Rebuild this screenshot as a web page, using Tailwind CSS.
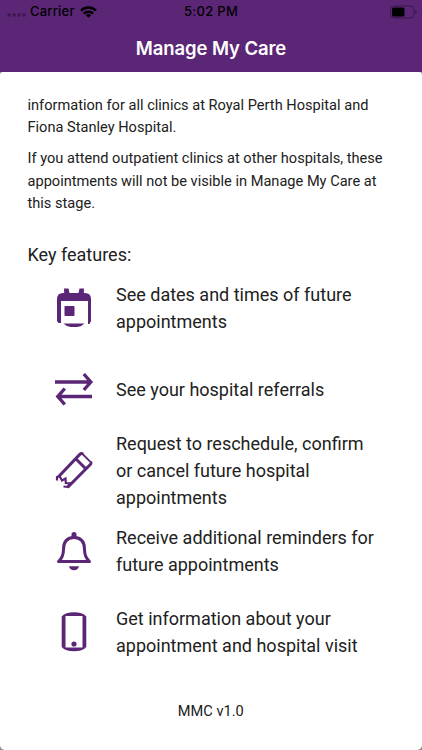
<!DOCTYPE html>
<html lang="en">
<head>
    <meta charset="UTF-8">
    <meta name="viewport" content="width=device-width, initial-scale=1.0">
    <title>Manage My Care</title>
    <script src="https://cdn.jsdelivr.net/npm/@tailwindcss/browser@4"></script>
</head>
<body class="bg-[#5b2676] h-[750px] overflow-hidden flex flex-col font-['Roboto',sans-serif] text-[#212121]">

    <!-- Status bar -->
    <div class="h-6 shrink-0 grid grid-cols-3 items-center pl-[7px] pr-[5px] font-['Inter',sans-serif] text-[13px] font-medium text-black">
        <div class="flex items-center">
            <svg class="w-[19px] h-1 mt-1.5 mr-1" viewBox="0 0 19 4" fill="#3d1650">
                <circle cx="2" cy="2" r="1.7"/><circle cx="7" cy="2" r="1.7"/><circle cx="12" cy="2" r="1.7"/><circle cx="17" cy="2" r="1.7"/>
            </svg>
            <span class="tracking-[0.2px]">Carrier</span>
            <svg class="w-[17px] h-3 ml-[5px]" viewBox="0 0 17 12" fill="none" stroke="#000" stroke-width="2.4">
                <path d="M1 4.600a10.600 10.600 0 0 1 15 0M3.800 7.700a6.600 6.600 0 0 1 9.400 0"/>
                <path d="M8.500 11.800 5.900 9.200a3.700 3.700 0 0 1 5.200 0z" fill="#000" stroke="none"/>
            </svg>
        </div>
        <div class="text-center tracking-[0.3px] -ml-0.5">5:02 PM</div>
        <svg class="w-[27px] h-3.5 justify-self-end" viewBox="0 0 27 14">
            <rect x=".5" y="1" width="23.500" height="12" rx="3.500" fill="none" stroke="#3a154c"/>
            <rect x="2" y="2.500" width="12.500" height="9" rx="1.500"/>
            <path d="M25.300 5v4q1.400-.8 1.400-2t-1.400-2z" fill="#3a154c"/>
        </svg>
    </div>

    <!-- Title bar -->
    <h1 class="h-12 shrink-0 text-center leading-[48px] font-['Inter',sans-serif] text-[18.5px] font-semibold tracking-[-0.1px] text-white">Manage My Care</h1>

    <div class="grow bg-[#8c8c8c]">
        <main class="h-full bg-white rounded-t-[3px] rounded-b-[5px] pl-[27.5px] pr-5 pt-[21.5px]">
            <div class="text-[14.6px] leading-[22.4px]">
                <p>information for all clinics at Royal Perth Hospital and<br>Fiona Stanley Hospital.</p>
                <p class="mt-[9px]">If you attend outpatient clinics at other hospitals, these<br>appointments will not be visible in Manage My Care at<br>this stage.</p>
            </div>
            <h2 class="mt-[26.5px] text-[18px] leading-[27px]">Key features:</h2>

            <ul class="-mt-[0.5px] text-[18px] leading-[27px] text-[#5b2676]">
                <li class="h-[81px] flex items-center">
                    <svg class="w-10 h-10 ml-[26px] mr-[22.5px] shrink-0" viewBox="0 0 40 40" fill="currentColor">
                        <path d="M3 33V11q0-6 6-6h1.200L10 .5h4.500L15.500 5h9l1-4.500H30L29.800 5h1.200q6 0 6 6v22l-1.500 3H34V13H7v22H4.500z"/>
                        <rect x="10.500" y="18" width="10" height="10" rx=".8"/>
                        <path d="M9.500 35.500h21q-3.500 3.500-7 3.500h-7q-3.500 0-7-3.500z"/>
                    </svg>
                    <p class="text-[#212121]">See dates and times of future<br>appointments</p>
                </li>
                <li class="h-[81px] flex items-center">
                    <svg class="w-10 h-10 ml-[26px] mr-[22.5px] shrink-0" viewBox="0 0 40 40" fill="none" stroke="currentColor" stroke-width="3.400">
                        <path d="M1 13h35M29.800 5l7 8-7 8"/>
                        <path d="M38 27.500H4M10.800 19.500l-7 8 7 8"/>
                    </svg>
                    <p class="text-[#212121]">See your hospital referrals</p>
                </li>
                <li class="h-[81px] flex items-center">
                    <svg class="w-10 h-10 ml-[26px] mr-[22.5px] shrink-0" viewBox="0 0 40 40" fill="none" stroke="currentColor" stroke-width="3">
                        <path d="M4 27.200 26 4.200q1.500-1.300 3 0"/>
                        <path d="M36.500 12q1 1.200-.2 2.500L13.500 37.500"/>
                        <path d="M28 3.500l8.700 8.700" stroke-width="1.800"/>
                        <path d="M21.500 8.500 31.500 18.500"/>
                        <path d="M3 26v4.500M5.500 26l2.500 4.500 3.500-2 .3 4.500 4 .2-1.800 3.300M9.500 36.500l4.500.5" stroke-width="2.200"/>
                    </svg>
                    <p class="text-[#212121]">Request to reschedule, confirm<br>or cancel future hospital<br>appointments</p>
                </li>
                <li class="h-[81px] flex items-center">
                    <svg class="w-10 h-10 ml-[26px] mr-[22.5px] shrink-0" viewBox="0 0 40 40" fill="none" stroke="currentColor" stroke-width="3" stroke-linejoin="round">
                        <path d="M4.500 30.500q5-4.500 5-12 0-12 10.500-12t10.500 12q0 7.500 5 12z"/>
                        <path d="M17.500 6.500v-3Q17.500 1 20 1t2.500 2.500v3zM15 35.300h10q-1 4-5 4t-5-4z" fill="currentColor" stroke="none"/>
                    </svg>
                    <p class="text-[#212121]">Receive additional reminders for<br>future appointments</p>
                </li>
                <li class="h-[81px] flex items-center">
                    <svg class="w-10 h-10 ml-[26px] mr-[22.5px] shrink-0" viewBox="0 0 40 40" fill="currentColor">
                        <path fill-rule="evenodd" d="M7.700 4.500Q11.500.3 20 .3t12.300 4.200v30.500Q28.500 39.300 20 39.300T7.700 35zM11.500 4v31.500h17V4z"/>
                        <circle cx="20" cy="32" r="2.600"/>
                    </svg>
                    <p class="text-[#212121]">Get information about your<br>appointment and hospital visit</p>
                </li>
            </ul>

            <p class="mt-[27.5px] -ml-2 text-center text-[14.6px] leading-[22px]">MMC v1.0</p>
        </main>
    </div>

</body>
</html>
